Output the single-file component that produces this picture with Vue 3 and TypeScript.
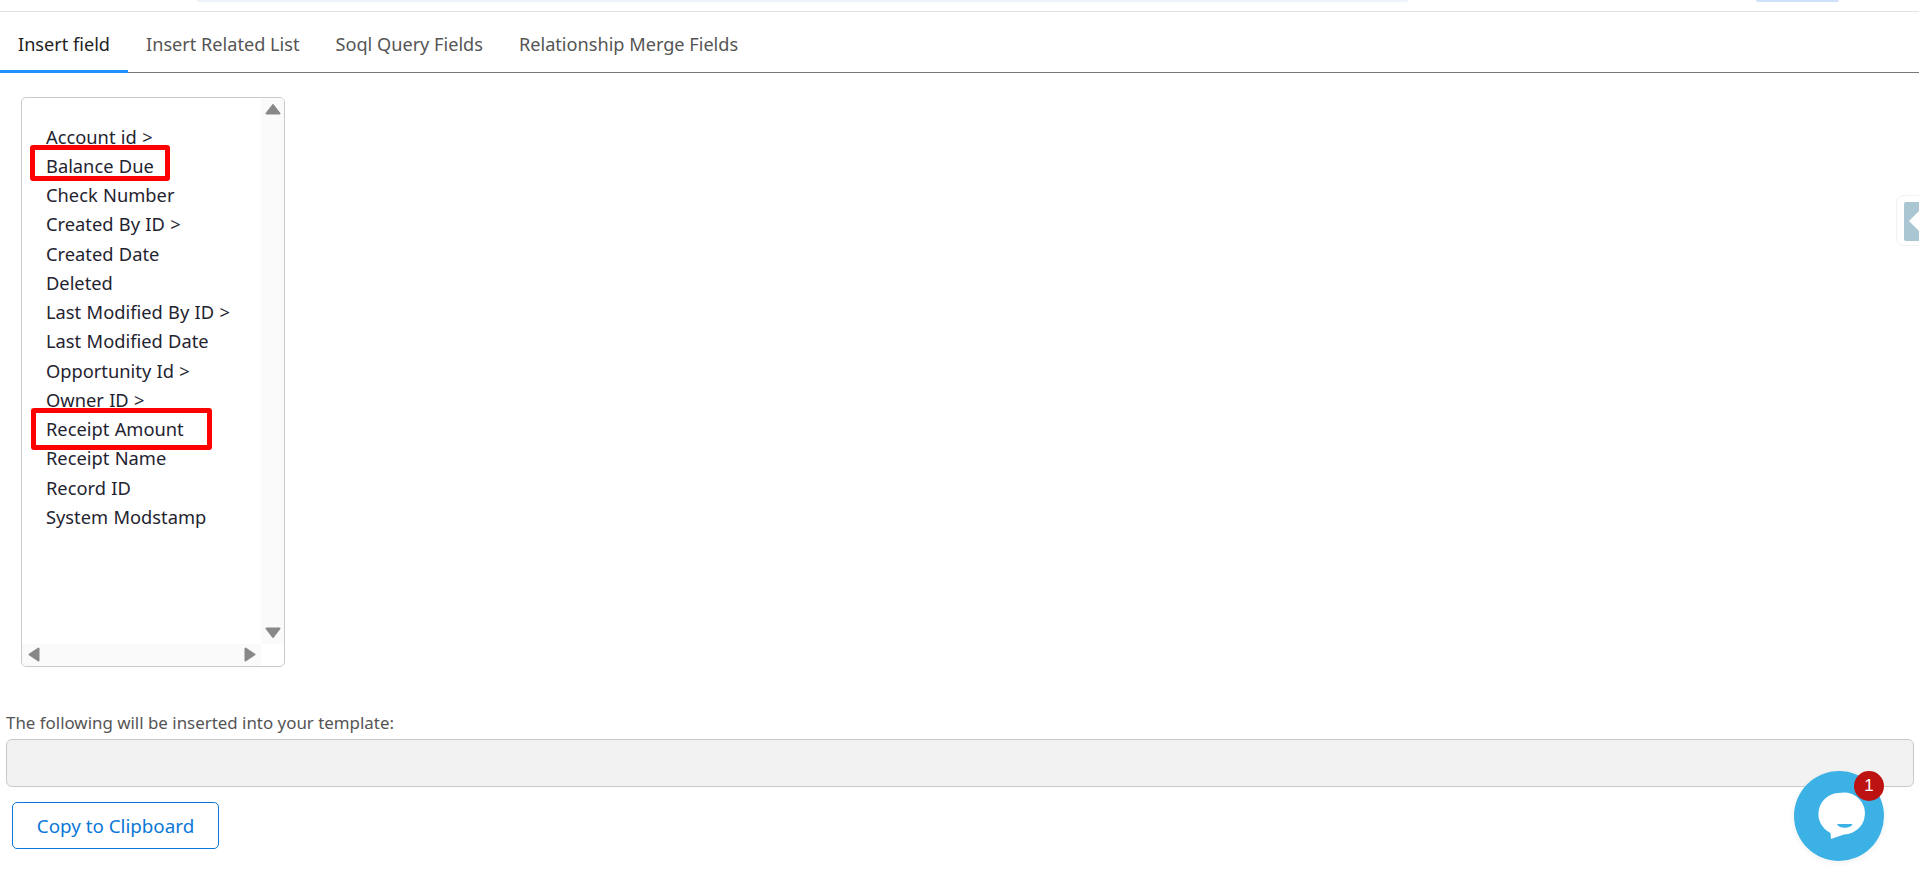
<script setup lang="ts">
const tabs: string[] = ['Insert field', 'Insert Related List', 'Soql Query Fields', 'Relationship Merge Fields']
const fields: string[] = [
  'Account id >', 'Balance Due', 'Check Number', 'Created By ID >', 'Created Date', 'Deleted',
  'Last Modified By ID >', 'Last Modified Date', 'Opportunity Id >', 'Owner ID >', 'Receipt Amount',
  'Receipt Name', 'Record ID', 'System Modstamp'
]
const marked: string[] = ['Balance Due', 'Receipt Amount']
</script>

<template>
  <div class="page">
    <header class="topbar">
      <span class="strip strip-search"></span>
      <span class="strip strip-btn"></span>
    </header>

    <nav class="tabs">
      <a v-for="(t, i) in tabs" :key="t" class="tab" :class="{ active: i === 0 }">{{ t }}</a>
    </nav>

    <div class="listbox">
      <div class="list-main">
        <ul class="fields">
          <li v-for="f in fields" :key="f" class="field">
            {{ f }}
            <span v-if="marked.includes(f)" class="mark" :class="{ wide: f === 'Receipt Amount' }"></span>
          </li>
        </ul>
        <div class="vbar">
          <svg class="arrow up" width="16" height="12" viewBox="0 0 16 12"><path d="M8 2 14.500 10.500H1.500Z" /></svg>
          <svg class="arrow down" width="16" height="12" viewBox="0 0 16 12"><path d="M8 10 14.500 1.500H1.500Z" /></svg>
        </div>
      </div>
      <div class="hbar">
        <svg class="arrow left" width="12" height="15" viewBox="0 0 12 15"><path d="M1.500 7.500 10.500 1.500V13.500Z" /></svg>
        <svg class="arrow right" width="12" height="15" viewBox="0 0 12 15"><path d="M10.500 7.500 1.500 1.500V13.500Z" /></svg>
      </div>
    </div>

    <label class="output-label">The following will be inserted into your template:</label>
    <div class="output"></div>
    <button class="copy" type="button">Copy to Clipboard</button>

    <div class="handle"><span class="handle-inner"><span class="handle-tri"></span></span></div>

    <div class="chat">
      <svg width="90" height="90" viewBox="0 0 90 90">
        <circle cx="45" cy="45" r="45" fill="#3bb1e5" />
        <path d="M45 22A21 21 0 1 1 50 63.400L37 68 36.500 62A21 21 0 0 1 45 22Z" fill="#fff" />
        <path d="M43 53h15.500a8 5 0 0 1-15.500 0Z" fill="#3bb1e5" />
      </svg>
      <span class="badge">1</span>
    </div>
  </div>
</template>

<style scoped>
.page {
  height: 870px;
  background: #fff;
  font-family: "Noto Sans", "Open Sans", sans-serif;
  font-size: 18.3px;
  color: #333;
  position: relative;
  overflow: hidden;
  box-sizing: border-box;
  display: flex;
  flex-direction: column;
  align-items: flex-start;
}
.topbar {
  width: 100%;
  height: 12px;
  flex: none;
  border-bottom: 1px solid #e3e3e3;
  box-sizing: border-box;
  position: relative;
  display: flex;
}
.strip {
  height: 2px;
  display: block;
  border-radius: 0 0 8px 8px;
}
.strip-search {
  margin-left: 197px;
  width: 1211px;
  background: #eef2fb;
}
.strip-btn {
  margin-left: 348px;
  width: 83px;
  background: #cfe0fa;
}
.tabs {
  width: 100%;
  height: 61px;
  flex: none;
  box-sizing: border-box;
  display: flex;
  border-bottom: 1px solid #777;
  font-size: 18.15px;
}
.tab {
  height: 60px;
  box-sizing: border-box;
  padding: 0 18px;
  line-height: 64px;
  color: #555;
  white-space: nowrap;
}
.tab.active {
  color: #222;
  border-bottom: 3px solid #1e90ff;
  height: 61px;
}
.listbox {
  width: 264px;
  height: 570px;
  flex: none;
  margin: 24px 0 0 21px;
  box-sizing: border-box;
  border: 1px solid #c9c9c9;
  border-radius: 5px;
  display: flex;
  flex-direction: column;
  overflow: hidden;
}
.list-main {
  flex: 1;
  display: flex;
  min-height: 0;
}
.fields {
  flex: 1;
  list-style: none;
  margin: 0;
  padding: 23.6px 0 0 24px;
}
.field {
  position: relative;
  height: 29.25px;
  line-height: 29.25px;
  color: #1f2430;
  white-space: nowrap;
  word-spacing: 0.6px;
}
.mark {
  position: absolute;
  left: -16px;
  top: -6px;
  width: 140px;
  height: 36px;
  box-sizing: border-box;
  border: 5px solid #f00;
  border-radius: 3px;
}
.mark.wide {
  left: -15px;
  top: -6px;
  width: 181px;
  height: 42px;
}
.vbar {
  width: 23px;
  flex: none;
  background: #fafafa;
  position: relative;
}
.hbar {
  height: 22px;
  flex: none;
  background: #fafafa;
  position: relative;
  margin-right: 23px;
}
.arrow {
  position: absolute;
  display: block;
  fill: #888;
  stroke: #888;
  stroke-width: 2;
  stroke-linejoin: round;
}
.up {
  left: 4px;
  top: 5px;
}
.down {
  left: 4px;
  bottom: 5px;
}
.left {
  left: 6px;
  top: 3px;
}
.right {
  left: 222px;
  top: 3px;
}
.output-label {
  margin: 43px 0 0 6px;
  height: 26px;
  line-height: 26px;
  font-size: 16.9px;
  color: #555;
  white-space: nowrap;
}
.output {
  width: 1908px;
  height: 48px;
  flex: none;
  margin: 3px 0 0 6px;
  box-sizing: border-box;
  background: #f2f2f2;
  border: 1px solid #c9c9c9;
  border-radius: 6px;
}
.copy {
  width: 207px;
  height: 47px;
  flex: none;
  margin: 15px 0 0 12px;
  padding: 0;
  background: #fff;
  border: 1px solid #0a78d6;
  border-radius: 5px;
  color: #0a78d6;
  font: inherit;
  font-size: 18.800px;
}
.handle {
  position: absolute;
  left: 1896px;
  top: 195px;
  width: 30px;
  height: 51px;
  box-sizing: border-box;
  border: 1px solid #f2f2f2;
  border-radius: 8px;
  background: #fff;
  padding: 6px 0 0 7px;
}
.handle-inner {
  display: block;
  width: 22px;
  height: 39px;
  background: #a9c6d2;
  border-radius: 2px;
  position: relative;
}
.handle-tri {
  position: absolute;
  left: 5px;
  top: 8px;
  width: 0;
  height: 0;
  border-top: 11px solid transparent;
  border-bottom: 11px solid transparent;
  border-right: 11px solid #fff;
}
.chat {
  position: absolute;
  left: 1794px;
  top: 771px;
  width: 90px;
  height: 90px;
  border-radius: 50%;
  box-shadow: 0 2px 6px rgba(0, 0, 0, 0.06);
}
.chat svg {
  display: block;
}
.badge {
  position: absolute;
  right: 0;
  top: 0;
  width: 30px;
  height: 30px;
  border-radius: 50%;
  background: #bd1212;
  color: #fff;
  font-family: "Liberation Sans", sans-serif;
  font-size: 17px;
  line-height: 30px;
  text-align: center;
}
</style>
